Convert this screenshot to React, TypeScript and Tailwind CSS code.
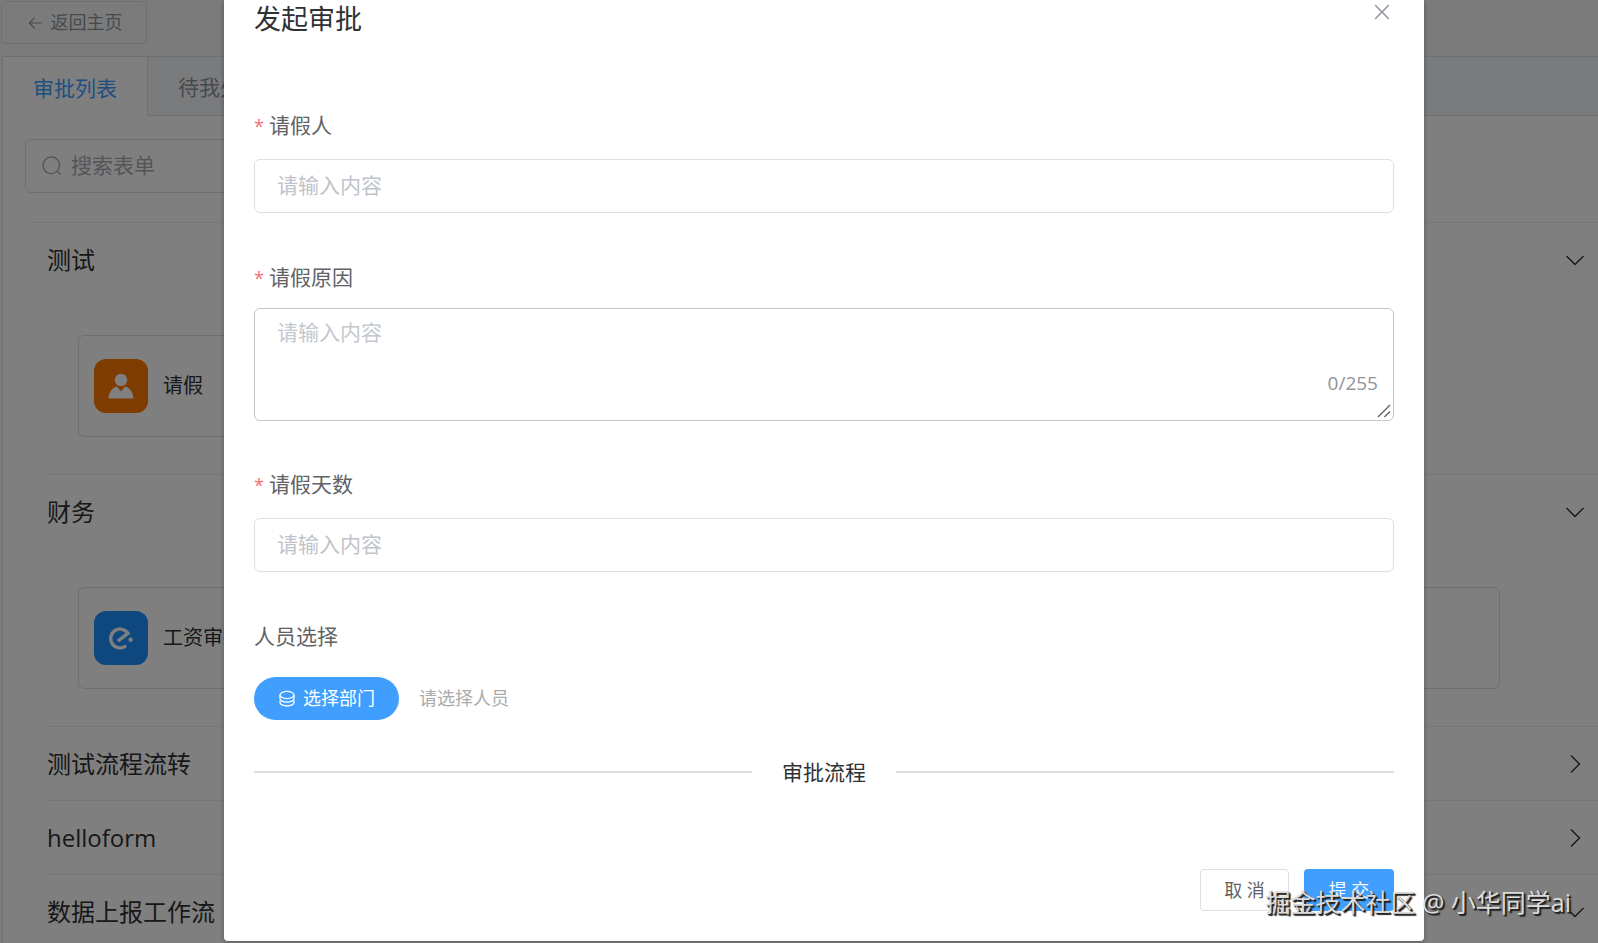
import type { ReactNode } from "react";

const iconProps = { viewBox: "0 0 1024 1024", fill: "currentColor", "aria-hidden": true };

const BackIcon = () => (
  <svg {...iconProps} className="size-[18px]">
    <path d="M224 480h640a32 32 0 1 1 0 64H224a32 32 0 0 1 0-64z" />
    <path d="m237.248 512 265.408 265.344a32 32 0 0 1-45.312 45.312l-288-288a32 32 0 0 1 0-45.312l288-288a32 32 0 1 1 45.312 45.312L237.248 512z" />
  </svg>
);

const SearchIcon = () => (
  <svg {...iconProps} className="size-[22px] shrink-0">
    <path d="m795.904 750.72 124.992 124.928a32 32 0 0 1-45.248 45.248L750.656 795.904a416 416 0 1 1 45.248-45.248zM480 832a352 352 0 1 0 0-704 352 352 0 0 0 0 704z" />
  </svg>
);

const CloseIcon = () => (
  <svg {...iconProps} className="size-6">
    <path d="M764.288 214.592 512 466.88 259.712 214.592a31.936 31.936 0 0 0-45.12 45.12L466.752 512 214.528 764.224a31.936 31.936 0 1 0 45.12 45.184L512 557.184l252.288 252.288a31.936 31.936 0 0 0 45.12-45.12L557.12 512.064l252.288-252.352a31.936 31.936 0 1 0-45.12-45.184z" />
  </svg>
);

const ArrowIcon = ({ open }: { open: boolean }) => (
  <svg viewBox="0 0 24 24" fill="none" stroke="currentColor" strokeWidth="1.4" className="size-6" aria-hidden>
    {open ? <path d="M3.5 8 12 16.5 20.5 8" /> : <path d="M8 3.5 16.5 12 8 20.5" />}
  </svg>
);

const UserIcon = () => (
  <svg viewBox="0 0 26 26" fill="currentColor" className="size-[26px]" aria-hidden>
    <circle cx="13" cy="7" r="6.2" />
    <path d="M9 13.4 13 18.6 17 13.4C22 14.6 25.4 19.4 25.4 25.4H.6C.6 19.4 4 14.6 9 13.4z" />
  </svg>
);

const LogoIcon = () => (
  <svg viewBox="0 0 24 24" fill="none" stroke="currentColor" strokeWidth="3.4" strokeLinecap="round" className="size-6" aria-hidden>
    <path d="M10 14.2 19 7.4A9.4 9.4 0 1 0 15.8 20.6" />
    <circle cx="21.6" cy="13.8" r="2.2" fill="currentColor" stroke="none" />
  </svg>
);

const CoinIcon = () => (
  <svg viewBox="0 0 18 18" fill="none" stroke="currentColor" strokeWidth="1.3" className="size-[18px]" aria-hidden>
    <ellipse cx="9" cy="5" rx="7" ry="3.6" />
    <path d="M2 5v3.6c0 2 3.1 3.6 7 3.6s7-1.6 7-3.6V5" />
    <path d="M2 10.4v2c0 2 3.1 3.6 7 3.6s7-1.6 7-3.6v-2" />
  </svg>
);

const ResizeGrip = () => (
  <svg
    viewBox="0 0 14 14"
    stroke="#606266"
    strokeWidth="1.4"
    className="pointer-events-none absolute right-[3px] bottom-[3px] size-3.5"
    aria-hidden
  >
    <path d="M1 13 13 1M7.5 13 13 7.5" />
  </svg>
);

type FormCardProps = { name: string; color: string; icon: ReactNode };

const FormCard = ({ name, color, icon }: FormCardProps) => (
  <button className="flex h-[102px] items-center gap-[15px] rounded-md border border-[#dcdfe6] px-[15px] text-left">
    <span className={`flex size-[54px] shrink-0 items-center justify-center rounded-xl text-white ${color}`}>
      {icon}
    </span>
    <span className="text-[20px] whitespace-nowrap text-[#303133]">{name}</span>
  </button>
);

type GroupProps = { title: string; open?: boolean; children?: ReactNode };

const Group = ({ title, open = false, children }: GroupProps) => (
  <section className="border-b border-[#ebeef5]">
    <button className="flex h-[73px] w-full items-center justify-between pr-[11px] text-[24px] text-[#303133]">
      <span>{title}</span>
      <ArrowIcon open={open} />
    </button>
    {children && (
      <div className="grid grid-cols-3 gap-8 pt-[39px] pr-[98px] pb-[37px] pl-[31px]">{children}</div>
    )}
  </section>
);

const ApprovalPage = () => (
  <main className="bg-[#f6f6f6] pt-px">
    <button className="ml-px flex h-[43px] w-[146px] items-center justify-center gap-[7px] rounded border border-[#dcdfe6] text-[18px] text-[#909399]">
      <BackIcon />
      返回主页
    </button>

    <div className="mt-3 ml-0.5 border-t border-l border-[#dcdfe6] bg-white">
      <nav className="flex h-[59px] border-b border-[#dcdfe6] bg-[#f5f7fa] text-[21px]">
        <button className="-mb-px w-[145px] border-r border-[#dcdfe6] bg-white pt-1 text-[#409eff]">审批列表</button>
        <button className="px-[30px] pt-1 text-[#909399]">待我处理</button>
      </nav>
      <div className="pt-[23px] pl-[22px]">
        <label className="flex h-[54px] w-80 items-center gap-2 rounded-md border border-[#dcdfe6] px-[15px] text-[#a8abb2]">
          <SearchIcon />
          <input
            aria-label="搜索表单"
            placeholder="搜索表单"
            className="w-full text-[21px] outline-none placeholder:text-[#a8abb2]"
          />
        </label>
        <div className="mt-[29px] ml-1 border-t border-[#ebeef5] pl-[18px]">
          <Group title="测试" open>
            <FormCard name="请假" color="bg-[#ff7800]" icon={<UserIcon />} />
          </Group>
          <Group title="财务" open>
            <FormCard name="工资审批" color="bg-[#1e90ff]" icon={<LogoIcon />} />
            <FormCard name="报销" color="bg-[#1e90ff]" icon={<LogoIcon />} />
            <FormCard name="采购" color="bg-[#ff7800]" icon={<UserIcon />} />
          </Group>
          <Group title="测试流程流转" />
          <Group title="helloform" />
          <Group title="数据上报工作流" open />
        </div>
      </div>
    </div>
  </main>
);

type FieldProps = { id: string; label: string; children: ReactNode };

const Field = ({ id, label, children }: FieldProps) => (
  <div className="flex flex-col">
    <label htmlFor={id} className="mb-[17px] flex h-8 items-center gap-[5px] text-[21px] text-[#606266]">
      <span className="text-[18px] text-[#f56c6c]">*</span>
      {label}
    </label>
    {children}
  </div>
);

const inputClass =
  "h-[54px] w-full rounded-md border border-[#dcdfe6] px-[22px] pb-0.5 text-[21px] text-[#606266] outline-none placeholder:text-[#bfc3cb]";

const ApprovalDialog = () => (
  <div
    role="dialog"
    aria-label="发起审批"
    className="rounded-b bg-white px-[30px] pb-[30px] shadow-[0_1px_5px_rgba(0,0,0,0.3)]"
  >
    <header className="flex items-start justify-between">
      <h1 className="text-[27px] leading-[38px] text-[#303133]">发起审批</h1>
      <button aria-label="关闭" className="text-[#909399]">
        <CloseIcon />
      </button>
    </header>

    <form className="mt-[72px] flex flex-col">
      <Field id="person" label="请假人">
        <input id="person" placeholder="请输入内容" className={inputClass} />
      </Field>
      <div className="mt-[49px]">
        <Field id="reason" label="请假原因">
          <div className="relative -mt-[3px] flex">
            <textarea
              id="reason"
              placeholder="请输入内容"
              maxLength={255}
              className="h-[113px] w-full resize-y rounded-md border border-[#c4c6c9] px-[22px] py-2.5 font-['Liberation_Mono','Noto_Sans_CJK_SC',monospace] text-[21px] leading-8 outline-none placeholder:text-[#c4c8cf] [&::-webkit-resizer]:hidden"
            />
            <span className="absolute right-4 bottom-6 text-[19px] leading-7 text-[#909399]">0/255</span>
            <ResizeGrip />
          </div>
        </Field>
      </div>
      <div className="mt-[48px]">
        <Field id="days" label="请假天数">
          <input id="days" placeholder="请输入内容" className={inputClass} />
        </Field>
      </div>

      <div className="mt-[49px]">
        <p className="flex h-8 items-center text-[21px] text-[#606266]">人员选择</p>
        <div className="mt-6 flex items-center gap-5 text-[18px]">
          <button
            type="button"
            className="flex h-[43px] w-[145px] items-center justify-center gap-[7px] rounded-full bg-[#409eff] text-white"
          >
            <CoinIcon />
            选择部门
          </button>
          <span className="text-[#aaaaaa]">请选择人员</span>
        </div>
      </div>

      <div className="mt-9 flex items-center gap-[30px] text-[21px] leading-8 text-[#303133]">
        <span className="h-0.5 flex-1 bg-[#dcdfe0]" />
        审批流程
        <span className="h-0.5 flex-1 bg-[#dcdfe0]" />
      </div>

      <footer className="mt-[81px] flex justify-end gap-[15px] text-[18px]">
        <button type="button" className="h-[42px] w-[89px] rounded border border-[#dcdfe6] text-[#606266]">
          取 消
        </button>
        <button type="submit" className="h-[42px] w-[90px] rounded bg-[#409eff] text-white">
          提 交
        </button>
      </footer>
    </form>
  </div>
);

export default function App() {
  return (
    <div className="relative h-screen overflow-hidden bg-white font-['Open_Sans','Noto_Sans_CJK_SC',sans-serif] font-normal">
      <ApprovalPage />
      <div className="absolute inset-0 bg-black/50 pr-[174px] pl-[224px]">
        <ApprovalDialog />
      </div>
      <p className="absolute right-[27px] bottom-[23px] text-[25px] leading-9 text-[#dcdcdc] [text-shadow:1px_1px_1px_#222,2px_2px_1px_#222]">
        掘金技术社区 @ 小华同学ai
      </p>
    </div>
  );
}
